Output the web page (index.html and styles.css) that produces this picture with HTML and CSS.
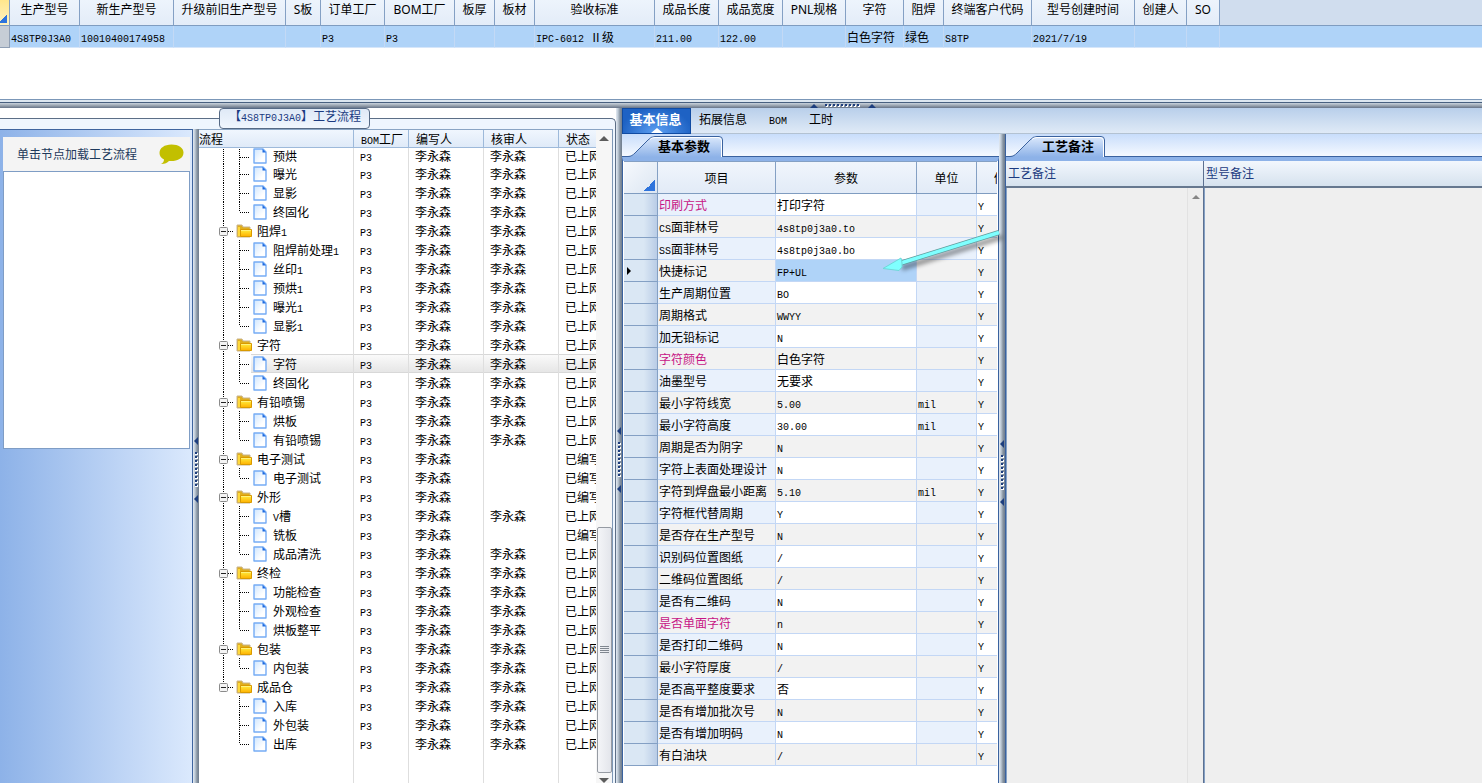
FILE: index.html
```html
<!DOCTYPE html>
<html lang="zh-CN">
<head>
  <meta charset="UTF-8">
  <meta name="viewport" content="width=device-width, initial-scale=1.0">
  <title>工艺流程</title>
  <link rel="stylesheet" href="styles.css">
</head>
<body>
  <!-- 图标 -->
  <svg class="symbols" aria-hidden="true">
    <defs>
      <linearGradient id="pageFill" x1="0" y1="0" x2="1" y2="1">
        <stop offset="0" stop-color="#cfe6ff"/>
        <stop offset="0.7" stop-color="#fff"/>
      </linearGradient>
      <linearGradient id="folderFill" x1="0" y1="0" x2="0" y2="1">
        <stop offset="0" stop-color="#ffef3e"/>
        <stop offset="1" stop-color="#ffb000"/>
      </linearGradient>
      <linearGradient id="tabFill" x1="0" y1="0" x2="0" y2="1">
        <stop offset="0" stop-color="#dce9fc"/>
        <stop offset="1" stop-color="#8db2e8"/>
      </linearGradient>
    </defs>
    <symbol id="page" viewBox="0 0 14 16">
      <path d="M1 1h9l3 3v11H1z" fill="url(#pageFill)" stroke="#75acf5" stroke-width="1.4" stroke-linejoin="round"/>
      <path d="M9.5 1v3.500H13z" fill="#1e6ae0"/>
    </symbol>
    <symbol id="folder" viewBox="0 0 17 14">
      <path d="M1 1h5l1 2h7v10H1z" fill="#dfae1e" stroke="#c9b48c"/>
      <path d="M2 3h2v9H2z" fill="#ffd93b"/>
      <path d="M4.500 5.500h11v7h-11z" fill="url(#folderFill)" stroke="#d99a00"/>
      <path d="M5 6.500h10" stroke="#fff27a"/>
    </symbol>
    <symbol id="guide-folder" viewBox="0 0 17 19">
      <path d="M4.500 0v19M9 10.500h5" class="dots"/>
      <rect x="0.500" y="6.500" width="8" height="8" rx="1" fill="#f4f4f4" stroke="#8b8b8b"/>
      <path d="M2 10.500h5" stroke="#222"/>
    </symbol>
    <symbol id="guide-folder-end" viewBox="0 0 17 19">
      <path d="M4.500 0v10M9 10.500h5" class="dots"/>
      <rect x="0.500" y="6.500" width="8" height="8" rx="1" fill="#f4f4f4" stroke="#8b8b8b"/>
      <path d="M2 10.500h5" stroke="#222"/>
    </symbol>
    <symbol id="guide-tee" viewBox="0 0 34 19">
      <path d="M4.500 0v19M20.500 0v19M21 10.500h9" class="dots"/>
    </symbol>
    <symbol id="guide-end" viewBox="0 0 34 19">
      <path d="M4.500 0v19M20.500 0v10M21 10.500h9" class="dots"/>
    </symbol>
    <symbol id="guide-tee-bare" viewBox="0 0 34 19">
      <path d="M20.500 0v19M21 10.500h9" class="dots"/>
    </symbol>
    <symbol id="guide-end-bare" viewBox="0 0 34 19">
      <path d="M20.500 0v10M21 10.500h9" class="dots"/>
    </symbol>
    <symbol id="tab-shape" viewBox="0 0 95 21">
      <path d="M0 20.500C3 20.500 5 19 7 17L20 4Q23 .5 27 .5H91Q94.500 .5 94.500 4V21H0z" fill="url(#tabFill)"/>
      <path d="M0 20.500C3 20.500 5 19 7 17L20 4Q23 .5 27 .5H91Q94.500 .5 94.500 4V21" fill="none" stroke="#3a629f"/>
      <path d="M22 3.500Q24 1.500 27 1.500H90Q93.500 1.500 93.500 5V21" fill="none" stroke="#fff"/>
    </symbol>
    <symbol id="grip" viewBox="0 0 6 66">
      <path d="M5 0v8L1 4z" fill="#1d3e7e"/>
      <path d="M3.500 16v36" stroke="#fff" stroke-width="3" stroke-dasharray="2 2"/>
      <path d="M3 15v36" stroke="#1d3e7e" stroke-width="2" stroke-dasharray="2 2"/>
      <path d="M5 58v8L1 62z" fill="#1d3e7e"/>
    </symbol>
  </svg>

  <!-- 生产型号列表 -->
  <div class="models">
    <table class="model-table">
      <colgroup>
        <col class="w10"><col class="w70"><col class="w94"><col class="w112"><col class="w35">
        <col class="w64"><col class="w70"><col class="w40"><col class="w40"><col class="w120">
        <col class="w64"><col class="w64"><col class="w63"><col class="w58"><col class="w40">
        <col class="w88"><col class="w103"><col class="w52"><col class="w33"><col>
      </colgroup>
      <thead>
        <tr>
          <th class="corner"></th><th>生产型号</th><th>新生产型号</th><th>升级前旧生产型号</th><th>S板</th>
          <th>订单工厂</th><th>BOM工厂</th><th>板厚</th><th>板材</th><th>验收标准</th>
          <th>成品长度</th><th>成品宽度</th><th>PNL规格</th><th>字符</th><th>阻焊</th>
          <th>终端客户代码</th><th>型号创建时间</th><th>创建人</th><th>SO</th><th class="rest"></th>
        </tr>
      </thead>
      <tbody>
        <tr>
          <td class="handle"></td><td><span class="en">4S8TP0J3A0</span></td><td><span class="en">10010400174958</span></td><td></td><td></td>
          <td><span class="en">P3</span></td><td><span class="en">P3</span></td><td></td><td></td><td><span class="en">IPC-6012 </span>Ⅱ级</td>
          <td><span class="en">211.00</span></td><td><span class="en">122.00</span></td><td></td><td>白色字符</td><td>绿色</td>
          <td><span class="en">S8TP</span></td><td><span class="en">2021/7/19</span></td><td></td><td></td><td></td>
        </tr>
      </tbody>
    </table>
  </div>

  <div class="splitter-h">
    <svg width="66" height="5" viewBox="0 0 66 5">
      <path d="M0 5h8L4 1zM58 5h8l-4-4z" fill="#1d3e7e"/>
      <path d="M16 3h36" stroke="#fff" stroke-width="2" stroke-dasharray="2 2"/>
      <path d="M15 2h36" stroke="#1d3e7e" stroke-width="2" stroke-dasharray="2 2"/>
    </svg>
  </div>

  <div class="main">
    <!-- 工艺流程 -->
    <fieldset class="flow">
      <legend>【<span class="en">4S8TP0J3A0</span>】工艺流程</legend>
      <div class="flow-body">
        <div class="loader">
          <div class="loader-head">
            <span>单击节点加载工艺流程</span>
            <svg width="25" height="21" viewBox="0 0 25 21">
              <path d="M12.500 0.500C5.500 0.500 .5 4 .5 9c0 3 1.500 5 4.500 6.500 0 2-1.200 3.500-3 4.500 3.500.2 6-1 8-3 8 .6 14.500-2.500 14.500-8.500C24.500 4 19.500.5 12.500.5z" fill="#c2bf00"/>
            </svg>
          </div>
          <div class="loader-list"></div>
        </div>
        <div class="splitter-v"><svg width="6" height="66"><use href="#grip"/></svg></div>
        <div class="tree">
          <table class="tree-table">
            <colgroup><col class="w155"><col class="w55"><col class="w75"><col class="w75"><col></colgroup>
            <thead>
              <tr><th>流程</th><th><span class="en">BOM</span>工厂</th><th>编写人</th><th>核审人</th><th>状态</th></tr>
            </thead>
            <tbody id="flowRows"></tbody>
          </table>
          <div class="scrollbar">
            <span class="arrow-up"></span>
            <div class="thumb"><i></i></div>
            <span class="arrow-down"></span>
          </div>
        </div>
      </div>
    </fieldset>

    <div class="splitter-v"><svg width="6" height="66"><use href="#grip"/></svg></div>

    <div class="detail">
      <nav class="tabs">
        <button class="active">基本信息</button>
        <button>拓展信息</button>
        <button><span class="en">BOM</span></button>
        <button>工时</button>
      </nav>
      <div class="panels">
        <!-- 基本参数 -->
        <section class="panel params">
          <div class="panel-tabs">
            <button><svg class="shape" width="95" height="21"><use href="#tab-shape"/></svg>基本参数</button>
          </div>
          <div class="param-body">
            <table class="param-table">
              <colgroup><col class="w34"><col class="w118"><col class="w141"><col class="w60"><col></colgroup>
              <thead>
                <tr><th class="corner"></th><th>项目</th><th>参数</th><th>单位</th><th class="cut">修</th></tr>
              </thead>
              <tbody id="paramRows"></tbody>
            </table>
            <svg class="pointer" width="124" height="52" viewBox="0 0 124 52">
              <path d="M120 7L20 38" class="pointer-shadow"/>
              <path d="M117 2.500L19 33" stroke="#5f9c9c" stroke-width="5"/>
              <path d="M117 2.500L19 33" stroke="#7fffff" stroke-width="3.500"/>
              <path d="M1 38.500L19 28l1 5 0 4-3 3.500z" fill="#7fffff" stroke="#6fd8d8"/>
            </svg>
          </div>
        </section>

        <div class="splitter-v"><svg width="6" height="66"><use href="#grip"/></svg></div>

        <!-- 工艺备注 -->
        <section class="panel notes">
          <div class="panel-tabs">
            <button><svg class="shape" width="95" height="21"><use href="#tab-shape"/></svg>工艺备注</button>
          </div>
          <div class="note-body">
            <div class="note process">
              <label for="processNote">工艺备注</label>
              <div class="note-text">
                <textarea id="processNote" readonly></textarea>
                <div class="note-scroll"><span class="arrow-up"></span></div>
              </div>
            </div>
            <div class="note">
              <label for="modelNote">型号备注</label>
              <div class="note-text"><textarea id="modelNote" readonly></textarea></div>
            </div>
          </div>
        </section>
      </div>
    </div>
  </div>

  <script>
    // [名称, 是否目录, 核审人, 状态]
    const P = '李永森';
    const flow = [
      ['预烘', 0, P, '已上网'],
      ['曝光', 0, P, '已上网'],
      ['显影', 0, P, '已上网'],
      ['终固化', 0, P, '已上网'],
      ['阻焊1', 1, P, '已上网'],
      ['阻焊前处理1', 0, P, '已上网'],
      ['丝印1', 0, P, '已上网'],
      ['预烘1', 0, P, '已上网'],
      ['曝光1', 0, P, '已上网'],
      ['显影1', 0, P, '已上网'],
      ['字符', 1, P, '已上网'],
      ['字符', 0, P, '已上网'],
      ['终固化', 0, P, '已上网'],
      ['有铅喷锡', 1, P, '已上网'],
      ['烘板', 0, P, '已上网'],
      ['有铅喷锡', 0, P, '已上网'],
      ['电子测试', 1, '', '已编写'],
      ['电子测试', 0, '', '已编写'],
      ['外形', 1, '', '已编写'],
      ['V槽', 0, P, '已上网'],
      ['铣板', 0, '', '已编写'],
      ['成品清洗', 0, P, '已上网'],
      ['终检', 1, P, '已上网'],
      ['功能检查', 0, P, '已上网'],
      ['外观检查', 0, P, '已上网'],
      ['烘板整平', 0, P, '已上网'],
      ['包装', 1, P, '已上网'],
      ['内包装', 0, P, '已上网'],
      ['成品仓', 1, P, '已上网'],
      ['入库', 0, P, '已上网'],
      ['外包装', 0, P, '已上网'],
      ['出库', 0, P, '已上网']
    ];
    const selectedFlow = 11;

    // [项目, 参数, 单位, 必填]
    const params = [
      ['印刷方式', '打印字符', '', 1],
      ['CS面菲林号', '4s8tp0j3a0.to', ''],
      ['SS面菲林号', '4s8tp0j3a0.bo', ''],
      ['快捷标记', 'FP+UL', ''],
      ['生产周期位置', 'BO', ''],
      ['周期格式', 'WWYY', ''],
      ['加无铅标记', 'N', ''],
      ['字符颜色', '白色字符', '', 1],
      ['油墨型号', '无要求', ''],
      ['最小字符线宽', '5.00', 'mil'],
      ['最小字符高度', '30.00', 'mil'],
      ['周期是否为阴字', 'N', ''],
      ['字符上表面处理设计', 'N', ''],
      ['字符到焊盘最小距离', '5.10', 'mil'],
      ['字符框代替周期', 'Y', ''],
      ['是否存在生产型号', 'N', ''],
      ['识别码位置图纸', '/', ''],
      ['二维码位置图纸', '/', ''],
      ['是否有二维码', 'N', ''],
      ['是否单面字符', 'n', '', 1],
      ['是否打印二维码', 'N', ''],
      ['最小字符厚度', '/', ''],
      ['是否高平整度要求', '否', ''],
      ['是否有增加批次号', 'N', ''],
      ['是否有增加明码', 'N', ''],
      ['有白油块', '/', '']
    ];
    const currentParam = 3;

    // 英文和数字使用等宽字体
    function text(value) {
      return value.replace(/[ -~]+/g, '<span class="en">$&</span>');
    }

    const lastFolder = flow.map((row) => row[1]).lastIndexOf(1);

    // 连接线的样式
    function guide(i) {
      if (flow[i][1]) {
        return i === lastFolder ? 'guide-folder-end' : 'guide-folder';
      }
      const last = i === flow.length - 1 || flow[i + 1][1];
      return (last ? 'guide-end' : 'guide-tee') + (i > lastFolder ? '-bare' : '');
    }

    document.getElementById('flowRows').innerHTML = flow.map((row, i) => `
      <tr class="${i === selectedFlow ? 'selected' : ''}">
        <td class="node">
          <div class="${row[1] ? 'branch' : 'leaf'}">
            <svg class="guide"><use href="#${guide(i)}"/></svg>
            <svg class="icon"><use href="#${row[1] ? 'folder' : 'page'}"/></svg>
            <span>${text(row[0])}</span>
          </div>
        </td>
        <td>${text('P3')}</td><td>${P}</td><td>${row[2]}</td><td>${row[3]}</td>
      </tr>`).join('') + '<tr class="blank"><td></td><td></td><td></td><td></td><td></td></tr>';

    document.getElementById('paramRows').innerHTML = params.map((row, i) => `
      <tr class="${i === currentParam ? 'current' : ''}">
        <td class="handle"></td>
        <td class="name ${row[3] ? 'required' : ''}">${text(row[0])}</td>
        <td class="value">${text(row[1])}</td>
        <td class="unit">${text(row[2])}</td>
        <td>${text('Y')}</td>
      </tr>`).join('');
  </script>
</body>
</html>
```
FILE: styles.css
```css
* {
  box-sizing: border-box;
}
body {
  margin: 0;
  height: 100vh;
  display: flex;
  flex-direction: column;
  overflow: hidden;
  font-family: "Noto Sans CJK SC", sans-serif;
  font-size: 12px;
  line-height: 16px;
  color: #000;
  background-color: #fff;
}
.symbols {
  position: absolute;
  width: 0;
  height: 0;
}
.dots {
  fill: none;
  stroke: #000;
  stroke-dasharray: 1 1;
}
.en {
  font-family: "Liberation Mono", monospace;
  font-size: 10px;
  line-height: 10px;
  white-space: pre;
}
button {
  font-family: inherit;
  font-size: 12px;
  line-height: 16px;
  color: #000;
  border: none;
  background: none;
  padding: 0;
}
table {
  border-collapse: separate;
  border-spacing: 0;
  table-layout: fixed;
  width: 100%;
}
th, td {
  padding: 0;
  overflow: hidden;
  white-space: nowrap;
  text-align: left;
  font-weight: normal;
}

/* 列宽 */
.w10 { width: 10px; }
.w33 { width: 33px; }
.w34 { width: 34px; }
.w35 { width: 35px; }
.w40 { width: 40px; }
.w52 { width: 52px; }
.w55 { width: 55px; }
.w58 { width: 58px; }
.w60 { width: 60px; }
.w63 { width: 63px; }
.w64 { width: 64px; }
.w70 { width: 70px; }
.w75 { width: 75px; }
.w88 { width: 88px; }
.w94 { width: 94px; }
.w103 { width: 103px; }
.w112 { width: 112px; }
.w118 { width: 118px; }
.w120 { width: 120px; }
.w141 { width: 141px; }
.w155 { width: 155px; }

/* 生产型号列表 */
.models {
  flex: none;
  height: 99px;
  background-color: #fff;
}
.model-table th {
  height: 26px;
  padding-bottom: 6px;
  text-align: center;
  font-family: "Noto Sans", "Noto Sans CJK SC", sans-serif;
  background: linear-gradient(#edf4fc, #e3ecf8);
  border-right: 1px solid #84a0c4;
  border-bottom: 1px solid #7f9cc0;
}
.model-table th.corner {
  background: linear-gradient(135deg, transparent 50%, #2f74dc 50%) 0 12px / 7px 11px no-repeat, linear-gradient(#ffe68c, #fff3c4);
}
.model-table th.rest {
  background: #d0ddee;
  border-right: none;
}
.model-table td {
  height: 22px;
  padding-left: 1px;
  background-color: #afd3f8;
  border-right: 1px solid #c3d9f5;
  border-bottom: 1px solid #d6e6fa;
}
.model-table td.handle {
  background-color: #c6cdd6;
  border-color: #8f9fb5;
}
.model-table td:last-child {
  border-right: none;
}

/* 分隔条 */
.splitter-h {
  flex: none;
  height: 9px;
  display: flex;
  justify-content: center;
  align-items: flex-end;
  padding-left: 204px;
  background: linear-gradient(#7b97b8 1px, #dde7f0 1px, #dde7f0 3px, #48607f 3px, #48607f 4px, #c8d2dc 4px, #a5afba 6px, #7b8797 8px, #66748a);
}
.splitter-v {
  flex: none;
  width: 6px;
  display: flex;
  align-items: center;
  padding-top: 28px;
  background: linear-gradient(90deg, #e4ebf3, #bdc9d5, #8794a2, #6f7d8e);
}

.main {
  flex: 1;
  min-height: 0;
  display: flex;
}

/* 工艺流程 */
.flow {
  flex: none;
  width: 616px;
  margin: 0;
  padding: 0;
  min-height: 0;
  display: flex;
  flex-direction: column;
  border: solid #5c6e86;
  border-width: 1px 1px 0 0;
  border-radius: 0 5px 0 0;
  background-color: #eff6fe;
}
.flow legend {
  height: 21px;
  margin-left: 219px;
  padding: 0 8px 4px 9px;
  color: #1b3a80;
  line-height: 14px;
  border: 1px solid #566a85;
  border-radius: 4px;
  background: linear-gradient(#dfe9f6, #f0f6fe);
}
.flow-body {
  flex: 1;
  min-height: 0;
  display: flex;
  padding-right: 2px;
}
.loader {
  flex: none;
  width: 193px;
  padding: 7px 2px 0 3px;
  border-top: 1px solid #3f659f;
  border-right: 1px solid #3f659f;
  background: linear-gradient(90deg, #8db2e8, #dbe9fd);
}
.loader-head {
  height: 34px;
  padding: 0 6px 0 14px;
  display: flex;
  align-items: center;
  justify-content: space-between;
  color: #1e395b;
  background-color: #f4f4f4;
}
.loader-list {
  height: 278px;
  background-color: #fff;
  border: 1px solid #7f9dc5;
}
.tree {
  flex: 1;
  min-width: 0;
  display: flex;
  overflow: hidden;
  background-color: #fff;
  border-top: 1px solid #8aa5c4;
  border-right: 1px solid #7d97b5;
}
.tree-table {
  flex: 1;
  min-width: 0;
  height: 100%;
}
.tree-table th {
  height: 18px;
  padding-left: 7px;
  background: linear-gradient(#f0f6fe, #dfeaf8);
  border-right: 1px solid #9db9da;
  border-bottom: 1px solid #9db9da;
}
.tree-table th:first-child {
  padding-left: 0;
}
.tree-table td {
  height: 19px;
  padding-left: 6px;
  border-right: 1px solid #dedede;
}
.tree-table tbody tr:first-child td,
.tree-table tbody tr:first-child .leaf {
  height: 16px;
}
.tree-table td.node {
  padding-left: 20px;
}
.tree-table th:last-child,
.tree-table td:last-child {
  border-right: none;
}
.tree-table tr.blank td {
  height: auto;
}
.tree-table tr.selected td {
  background: linear-gradient(#d8d8d8 1px, #fafafa 1px, #e6e6e6 18px, #d8d8d8 18px);
}
.tree-table tr.selected td.node {
  background-position: 52px 0;
  background-repeat: no-repeat;
}
.leaf, .branch {
  height: 19px;
  display: flex;
  align-items: center;
}
.guide {
  flex: none;
  width: 34px;
  height: 19px;
}
.icon {
  flex: none;
  width: 14px;
  height: 16px;
  margin-right: 6px;
}
.branch .guide {
  width: 17px;
}
.branch .icon {
  width: 17px;
  height: 14px;
  margin-right: 4px;
}

.scrollbar {
  flex: none;
  width: 16px;
  display: flex;
  flex-direction: column;
  align-items: center;
  padding-top: 6px;
  background-color: #f6f6f6;
}
.arrow-up {
  border: 5px solid transparent;
  border-top: none;
  border-bottom: 5px solid #5c5c5c;
}
.arrow-down {
  border: 5px solid transparent;
  border-bottom: none;
  border-top: 5px solid #5c5c5c;
}
.thumb {
  width: 15px;
  height: 246px;
  margin-top: auto;
  margin-bottom: 5px;
  display: flex;
  align-items: center;
  justify-content: center;
  border: 1px solid #969ba3;
  border-radius: 2px;
  background: linear-gradient(90deg, #f4f5f8, #e3e5eb);
}
.thumb i {
  width: 9px;
  height: 8px;
  background: repeating-linear-gradient(#808790 0, #808790 1px, transparent 1px, transparent 2px);
}

/* 明细 */
.detail {
  flex: 1;
  min-width: 0;
  display: flex;
  flex-direction: column;
}
.tabs {
  flex: none;
  height: 26px;
  display: flex;
  align-items: stretch;
  background: linear-gradient(#b9cfea, #dfeaf7);
  border-bottom: 1px solid #b3c2d2;
}
.tabs button {
  padding: 0 8px 3px;
  margin-right: 6px;
}
.tabs button.active {
  position: relative;
  height: 26px;
  margin-right: 0;
  padding: 0 8px 4px 6px;
  width: 69px;
  font-size: 13px;
  font-weight: bold;
  color: #fff;
  white-space: nowrap;
  border: 1px solid #104ba2;
  background: radial-gradient(ellipse at 50% 100%, #5da0f2, #1e62c4 75%);
}
.tabs button.active::after {
  content: "";
  position: absolute;
  left: 28px;
  bottom: 0;
  border: 6px solid transparent;
  border-top: none;
  border-bottom: 5px solid #fff;
}
.panels {
  flex: 1;
  min-height: 0;
  display: flex;
}
.panel {
  display: flex;
  flex-direction: column;
  min-width: 0;
}
.panel-tabs {
  flex: none;
  height: 23px;
  padding: 2px 0 0 6px;
  background: linear-gradient(#c8ddfb, #f5f9ff);
  border-bottom: 1px solid #3a629f;
}
.panel-tabs button {
  position: relative;
  z-index: 1;
  width: 95px;
  height: 21px;
  padding: 0 0 1px 30px;
  text-align: left;
  font-size: 13px;
  font-weight: bold;
}
.shape {
  position: absolute;
  left: 0;
  top: 0;
  z-index: -1;
}

/* 基本参数 */
.params {
  flex: none;
  width: 377px;
}
.param-body {
  flex: 1;
  min-height: 0;
  position: relative;
  padding-left: 1px;
  padding-right: 1px;
  background-color: #fff;
  border-top: 4px solid #8db2e8;
  border-left: 1px solid #3a629f;
  border-right: 1px solid #3a629f;
}
.param-table th {
  height: 33px;
  text-align: center;
  background: linear-gradient(#f0f5fc, #e2ebf7);
  border-top: 1px solid #84a0c4;
  border-right: 1px solid #84a0c4;
  border-bottom: 1px solid #7f9cc0;
}
.param-table th.corner {
  background: linear-gradient(135deg, transparent 50%, #2f74dc 50%) 20px 18px / 11px 11px no-repeat, linear-gradient(135deg, #f6f9fd, #dce6f2);
}
.param-table th.cut {
  text-align: left;
  padding-left: 17px;
  text-overflow: clip;
}
.param-table td {
  height: 22px;
  padding-left: 1px;
  border-right: 1px solid #c3d7f5;
  border-bottom: 1px solid #c3d7f5;
  background-color: #fff;
}
.param-table td.name,
.param-table td.unit {
  background-color: #e9f1fc;
}
.param-table tr:nth-child(even) td {
  background-color: #f2f2f2;
}
.param-table td.required {
  color: #c71585;
}
.param-table td.handle,
.param-table tr:nth-child(even) td.handle {
  background: linear-gradient(90deg, #dae7f4 60%, #b9cce6);
  border-right: 1px solid #84a0c4;
  border-bottom: 1px solid #84a0c4;
}
.param-table tr.current td.value {
  background-color: #afd3f8;
}
.param-table tr.current td.handle::before {
  content: "";
  display: block;
  width: 0;
  margin-left: 2px;
  border: 4px solid transparent;
  border-right: none;
  border-left: 4px solid #000;
}
.param-table th:last-child,
.param-table td:last-child {
  border-right: none;
}
.pointer {
  position: absolute;
  right: -8px;
  top: 69px;
  fill: none;
}
.pointer-shadow {
  stroke: #000;
  stroke-opacity: 0.4;
  stroke-width: 5;
  filter: blur(2px);
}

/* 备注 */
.notes {
  flex: 1;
  border-left: 1px solid #3a629f;
}
.notes .panel-tabs {
  padding-left: 4px;
}
.notes .panel-tabs button {
  padding-left: 32px;
}
.note-body {
  flex: 1;
  min-height: 0;
  display: flex;
  border-top: 4px solid #8db2e8;
}
.note {
  flex: 1;
  display: flex;
  flex-direction: column;
}
.note.process {
  flex: none;
  width: 198px;
  border-right: 1px solid #5c7090;
}
.note label {
  height: 27px;
  padding: 4px 2px;
  color: #1b3a80;
  background: linear-gradient(#f2f7fd, #d6e2ee);
  border-bottom: 2px solid #66788f;
}
.note-text {
  flex: 1;
  display: flex;
  background-color: #efefef;
  border-left: 1px solid #84a0c4;
}
.note textarea {
  flex: 1;
  min-width: 0;
  padding: 2px;
  border: none;
  outline: none;
  resize: none;
  background: none;
}
.note-scroll {
  width: 16px;
  padding: 7px 4px;
  background-color: #eee;
  border-left: 1px solid #e2e2e2;
}
.note-scroll .arrow-up {
  display: block;
  width: 8px;
  border-width: 0 4px 4px;
  border-bottom-color: #868686;
}
```
